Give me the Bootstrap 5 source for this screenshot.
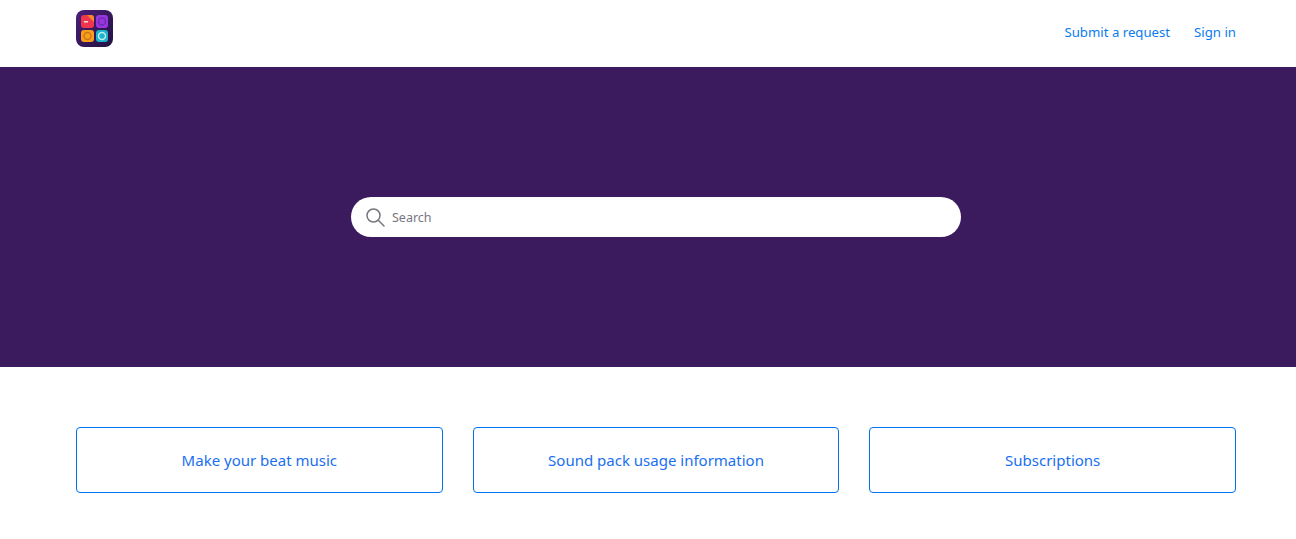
<!DOCTYPE html>
<html lang="en">

<head>
    <meta charset="UTF-8">
    <meta name="viewport" content="width=device-width, initial-scale=1.0">
    <title>Help Center</title>
    <link rel="stylesheet" href="https://cdn.jsdelivr.net/npm/bootstrap@5.3.3/dist/css/bootstrap.min.css">
    <style>
        html {
            overflow: hidden;
        }

        body {
            font-family: "Noto Sans", "Open Sans", sans-serif;
            width: 1312px;
        }

        .page-wrap {
            width: 1160px;
            margin: 0 auto;
        }

        .top-bar {
            height: 67px;
        }

        .logo-link {
            margin-top: 10px;
        }

        .top-link {
            color: #0a7cf0;
            font-size: 13.2px;
            line-height: 18px;
            text-decoration: none;
        }

        .top-links {
            gap: 24px;
            margin-top: 23px;
        }

        .hero-band {
            height: 300px;
            background: #3b1a5e;
        }

        .search-box {
            width: 610px;
            height: 40px;
            border-radius: 20px;
            padding-left: 15px;
            gap: 7px;
        }

        .search-box input {
            border: 0;
            outline: 0;
            padding: 3px 0 0;
            flex: 1;
            font-size: 12.5px;
            color: #555;
            background: transparent;
        }

        .search-box input::placeholder {
            color: #77757f;
        }

        .cat-row {
            gap: 30px;
            padding-top: 60px;
        }

        .cat-box {
            flex: 1 1 0;
            height: 66px;
            border: 1px solid #0072ef;
            border-radius: 4px;
            color: #1a6ff0;
            font-size: 15px;
            text-decoration: none;
        }
    </style>
</head>

<body>
    <header class="top-bar">
        <div class="page-wrap h-100 d-flex align-items-start justify-content-between">
            <a href="#" class="logo-link d-block" aria-label="Home">
                <svg class="d-block" width="37" height="37" viewBox="0 0 37 37">
                    <defs>
                        <linearGradient id="logoBg" x1="0" y1="0" x2="1" y2="1">
                            <stop offset="0" stop-color="#4a1f78" />
                            <stop offset="1" stop-color="#231240" />
                        </linearGradient>
                    </defs>
                    <rect width="37" height="37" rx="8" fill="url(#logoBg)" />
                    <rect x="5" y="5" width="13" height="13" rx="3" fill="#f0364f" />
                    <path d="M11 5h4a3 3 0 0 1 3 3v4z" fill="#f58a2c" />
                    <rect x="8" y="11" width="4" height="1.500" fill="#ffd9d9" />
                    <rect x="20" y="5" width="12" height="13" rx="3" fill="#9a35e0" />
                    <circle cx="26" cy="11.500" r="3.500" fill="none" stroke="#6a2fb0" stroke-width="1.500" />
                    <rect x="5" y="20" width="13" height="12" rx="3" fill="#fb9f1a" />
                    <circle cx="11.500" cy="26" r="3.500" fill="none" stroke="#c9781a" stroke-width="1.500" />
                    <rect x="20" y="20" width="12" height="12" rx="3" fill="#18b5cc" />
                    <circle cx="26" cy="26" r="3.500" fill="none" stroke="#c4e9ee" stroke-width="1.500" />
                </svg>
            </a>
            <nav class="d-flex top-links">
                <a href="#" class="top-link">Submit a request</a>
                <a href="#" class="top-link">Sign in</a>
            </nav>
        </div>
    </header>

    <section class="hero-band d-flex align-items-center justify-content-center">
        <form class="search-box bg-white d-flex align-items-center" role="search">
            <svg width="19" height="19" viewBox="0 0 19 19" fill="none" stroke="#77757f" stroke-width="1.500">
                <circle cx="7.500" cy="7.500" r="6.500" />
                <path d="M12.300 12.300L18 18" stroke-linecap="round" />
            </svg>
            <input type="search" placeholder="Search" aria-label="Search">
        </form>
    </section>

    <main class="page-wrap d-flex cat-row">
        <a href="#" class="cat-box d-flex align-items-center justify-content-center">Make your beat music</a>
        <a href="#" class="cat-box d-flex align-items-center justify-content-center">Sound pack usage information</a>
        <a href="#" class="cat-box d-flex align-items-center justify-content-center">Subscriptions</a>
    </main>

    <script src="https://cdn.jsdelivr.net/npm/bootstrap@5.3.3/dist/js/bootstrap.bundle.min.js"></script>
</body>

</html>
